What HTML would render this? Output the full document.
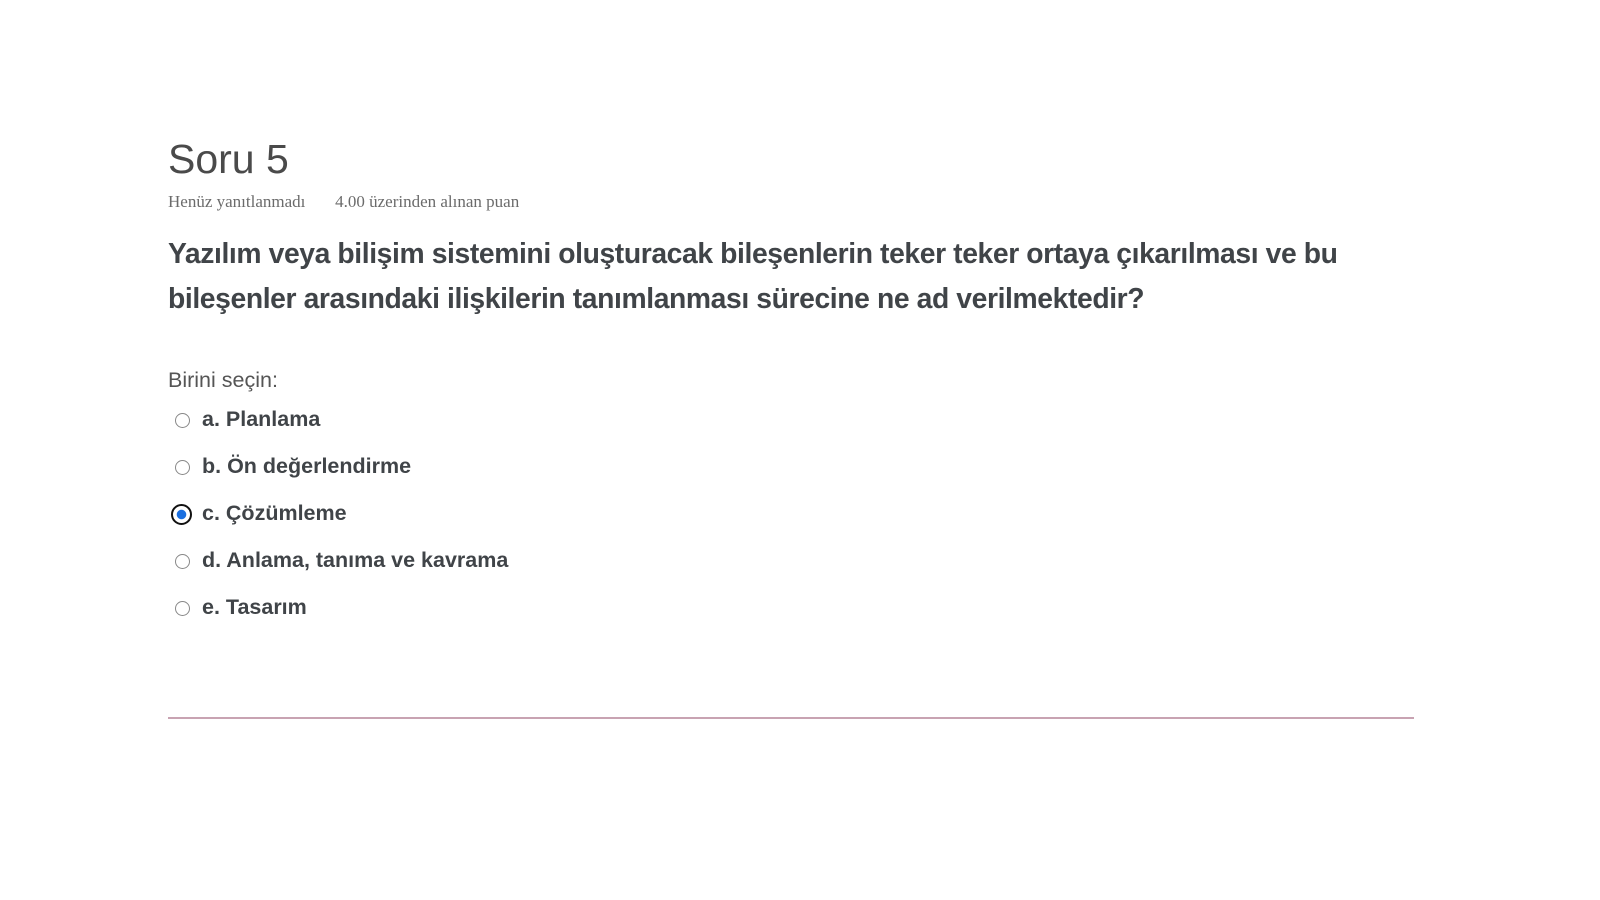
<!DOCTYPE html>
<html><head><meta charset="utf-8"><style>
body{margin:0;background:#fff;width:1600px;height:900px;position:relative;font-family:"Liberation Sans",sans-serif;color:#3c4043}
.abs{position:absolute;white-space:nowrap}
h1{position:absolute;left:168px;top:135px;margin:0;font-weight:normal;font-size:41px;color:#4a4a4a;line-height:49px}
.meta{left:168px;top:192px;font-family:"Liberation Serif",serif;font-size:17px;color:#6b6b6b}
.q{position:absolute;left:168px;top:231px;width:1250px;font-size:28.3px;font-weight:bold;line-height:45px;color:#404448;letter-spacing:-0.4px}
.sel{left:168px;top:368px;font-size:21.5px;color:#555}
.opt{left:202px;font-size:21.5px;font-weight:bold;color:#404448}
.r{position:absolute;left:175px;width:13px;height:13px;border:1px solid #888;border-radius:50%;background:#fff}
.r.on{left:171px;width:17px;height:17px;border:2px solid #111;background:radial-gradient(circle,#1a6fe0 0 4.5px,#fff 5px)}
.hr{position:absolute;left:168px;top:717px;width:1246px;height:2px;background:#c8a3b2}
</style></head><body>
<h1>Soru 5</h1>
<div class="abs meta">Henüz yanıtlanmadı &nbsp;&nbsp;&nbsp;&nbsp;&nbsp; 4.00 üzerinden alınan puan</div>
<div class="q">Yazılım veya bilişim sistemini oluşturacak bileşenlerin teker teker ortaya çıkarılması ve bu bileşenler arasındaki ilişkilerin tanımlanması sürecine ne ad verilmektedir?</div>
<div class="abs sel">Birini seçin:</div>
<div class="r" style="top:413px"></div><div class="abs opt" style="top:407px">a. Planlama</div>
<div class="r" style="top:460px"></div><div class="abs opt" style="top:454px">b. Ön değerlendirme</div>
<div class="r on" style="top:504px"></div><div class="abs opt" style="top:501px">c. Çözümleme</div>
<div class="r" style="top:554px"></div><div class="abs opt" style="top:548px">d. Anlama, tanıma ve kavrama</div>
<div class="r" style="top:601px"></div><div class="abs opt" style="top:595px">e. Tasarım</div>
<div class="hr"></div>
</body></html>
